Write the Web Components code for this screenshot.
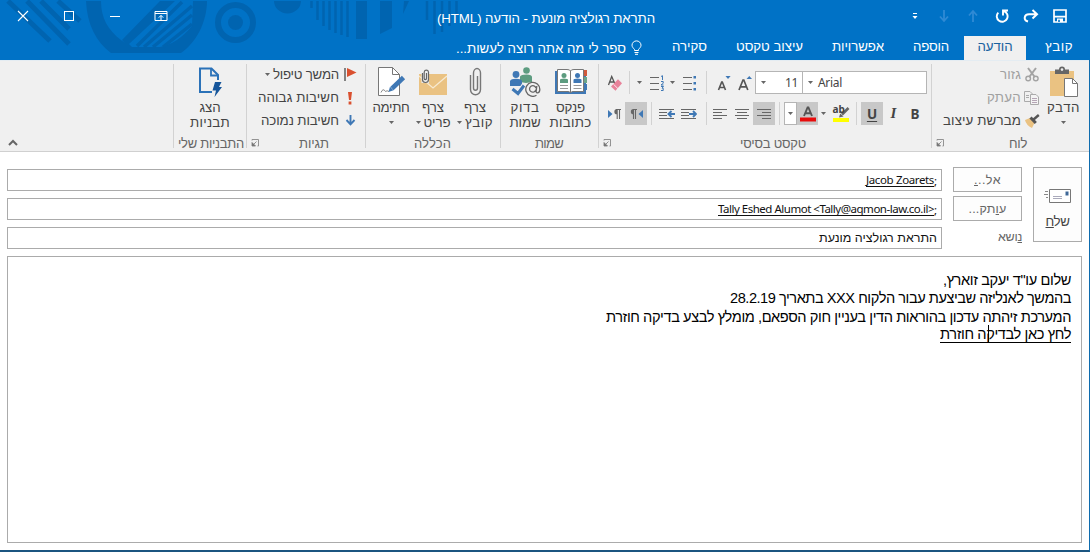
<!DOCTYPE html>
<html lang="he" dir="rtl">
<head>
<meta charset="utf-8">
<title>התראת רגולציה מונעת - הודעה (HTML)</title>
<style>
html,body{margin:0;padding:0;width:1090px;height:552px;overflow:hidden;background:#fff}
body{font-family:"Liberation Sans",Arial,sans-serif;font-size:13.3px;color:#444}
</style>
</head>
<body>
<mail-window></mail-window>
<script>
const ICONS = {
  close:[12,12,'<path d="M1 1L11 11M11 1L1 11" stroke="#fff" stroke-width="1.1"/>'],
  max:[12,12,'<rect x="1.5" y="1.5" width="9" height="9" stroke="#fff"/>'],
  min:[12,12,'<path d="M1 6.5H11" stroke="#fff"/>'],
  ribbonopt:[14,12,'<path d="M1 1.5H13V10.5H1ZM1 3.5H13M7 10V5.5M4.8 7.6L7 5.4L9.2 7.6" stroke="#fff"/>'],
  qmore:[8,10,'<path d="M2 2.5H6" stroke="#fff"/><path d="M1.500 5H6.500L4 8Z" fill="#fff"/>'],
  qdown:[12,14,'<path d="M6 1V12M2 7.5L6 12L10 7.5" stroke="#2f8ad4" stroke-width="1.8"/>'],
  qup:[12,14,'<path d="M6 13V2M2 6.5L6 2L10 6.5" stroke="#2f8ad4" stroke-width="1.8"/>'],
  undo:[14,14,'<path d="M3.3 3.6A5.4 5.4 0 1 0 8.8 2.2M8 6.5V1.5H13" stroke="#fff" stroke-width="1.9"/>'],
  redo:[16,14,'<path d="M5 12.5C0 11 1 5.2 6 5.2H13M9.5 1L14 5.2L9.5 9.4" stroke="#fff" stroke-width="2"/>'],
  save:[14,14,'<path d="M1 1H13V13H1ZM1 7.6H13" stroke="#fff" stroke-width="1.7"/><path d="M4 9.5H10V13H4Z" fill="#fff"/><path d="M5.2 10.7H6.8V13H5.2Z" fill="#0072c6"/>'],
  bulb:[11,15,'<path d="M3.5 10.5V9.5C2.5 8.3 1 7 1 5.2A4.5 4.3 0 0 1 10 5.2C10 7 8.5 8.3 7.5 9.5V10.5ZM3.5 12.5H7.5M4 14.3H7" stroke="#fff"/>'],
  paste:[30,32,'<path d="M1 5H25V30H1Z" fill="#eac282"/><path d="M6 3.5H10A3 3 0 0 1 16 3.5H20V8H6Z" fill="#666"/><circle cx="13" cy="3.6" r="1.3" fill="#eee"/><path d="M15.500 12.500H23.500L28.500 17.500V30.500H15.500Z" fill="#fff" stroke="#777"/><path d="M23.500 12.500V17.500H28.500" stroke="#777"/>'],
  cut:[14,15,'<path d="M3 1L9.8 10M11 1L4.2 10" stroke="#a3a3a3" stroke-width="2"/><circle cx="3.2" cy="11.500" r="2.300" stroke="#a3a3a3" stroke-width="1.400"/><circle cx="10.800" cy="11.500" r="2.300" stroke="#a3a3a3" stroke-width="1.400"/>'],
  copy:[15,14,'<path d="M.5.5H6L8.500 3V10.500H.5Z M2 4.500H5M2 6.500H5" stroke="#aaa"/><path d="M6.500 3.500H12L14.500 6V13.500H6.500Z" fill="#f4f4f4" stroke="#aaa"/><path d="M8 7.500H13M8 9.500H13M8 11.500H13" stroke="#b5a5b5"/>'],
  brush:[16,14,'<path d="M1 6L6 4L10.500 9L8 14Q2 11 1 6Z" fill="#eac282"/><path d="M6.500 3.500L11.800 9" stroke="#555" stroke-width="3"/><path d="M9.500 5.500L14.800 1" stroke="#555" stroke-width="2.400"/>'],
  eraser:[15,16,'<path d="M1.500 10L4.700 1.500L8 9M3 7H7" stroke="#555" stroke-width="1.300"/><path d="M4 11.500L11 4.300L15 8.300L8.500 15.800Z" fill="#e8829a"/><path d="M6.500 9.300L10.800 13.500" stroke="#fff" stroke-width=".8"/>'],
  numlist:[16,16,'<path d="M1 2.500H10M1 8.500H10M1 14.500H10" stroke="#666"/><path d="M12 1.500L13.500.7V5M12 6.500H14.200V8.300L12 10H14.500M12 11.500H14.500L13 13.200H14.200V15.500H12" stroke="#3f78b5" stroke-width="1"/>'],
  bullist:[15,16,'<path d="M1 2.500H10M1 8.500H10M1 14.500H10" stroke="#666"/><path d="M11.500 1H14V3.500H11.500ZM11.500 7H14V9.500H11.500ZM11.500 13H14V15.500H11.500Z" fill="#3f78b5"/>'],
  afont:[14,16,'<path d="M1 15L5 5H5.800L9.800 15M2.500 11.800H8.500" stroke="#555" stroke-width="1.700"/><path d="M8.500 4L11.300 1L14 4Z" fill="#3f78b5"/>'],
  asmall:[14,16,'<path d="M1.500 15L4.700 7H5.300L8.500 15M2.600 12.500H7.500" stroke="#555" stroke-width="1.600"/><path d="M8.500 1H13.600L11 4Z" fill="#3f78b5"/>'],
  ltr:[13,12,'<path d="M0 2L4.500 6L0 10Z" fill="#3f78b5"/><path d="M11.500 11V1.500M9.200 11V1.500M13 1.500H8" stroke="#666" stroke-width="1.100"/><path d="M9 1A2.600 2.600 0 0 0 9 6.300Z" fill="#666"/>'],
  rtl:[13,12,'<path d="M13 2L8.500 6L13 10Z" fill="#3f78b5"/><path d="M5.500 11V1.500M3.500 11V1.500M7 1.500H3" stroke="#666" stroke-width="1.100"/><path d="M3.500 1A2.600 2.600 0 0 0 3.500 6.300Z" fill="#666"/>'],
  indl:[16,12,'<path d="M0 1.500H15M0 4.500H8M0 7.500H8M0 10.500H15" stroke="#666"/><path d="M9.500 6H16M12.500 3L9.500 6L12.500 9" stroke="#3f78b5" stroke-width="1.900"/>'],
  indr:[16,12,'<path d="M0 1.500H15M0 4.500H8M0 7.500H8M0 10.500H15" stroke="#666"/><path d="M8 6H15M12 3L15 6L12 9" stroke="#3f78b5" stroke-width="1.900"/>'],
  all:[14,12,'<path d="M0 1.500H14M0 4.500H9M0 7.500H14M0 10.500H9" stroke="#666"/>'],
  alc:[14,12,'<path d="M0 1.500H14M2 4.500H12M0 7.500H14M2 10.500H12" stroke="#666"/>'],
  alr:[14,12,'<path d="M0 1.500H14M5 4.500H14M0 7.500H14M5 10.500H14" stroke="#666"/>'],
  acolor:[16,16,'<path d="M4 10L7.600 1.500H8.400L12 10M5.200 7.300H10.800" stroke="#555" stroke-width="1.900"/><path d="M0 11.500H16V15.500H0Z" fill="#e80c0c"/>'],
  hilite:[17,17,'<path d="M0 13H16V17H0Z" fill="#ff0"/><path d="M9 9.500L15.500 3" stroke="#666" stroke-width="2.600"/><path d="M6 12.500L7.200 8.500L10.500 11.500Z" fill="#666"/>'],
  book:[32,27,'<path d="M0 3H31V26H0Z" fill="#3f78b5"/><path d="M29 2H32V8H29Z" fill="#d05a3c"/><path d="M29 9H32V15H29Z" fill="#6aa58a"/><path d="M29 16H32V22H29Z" fill="#3f78b5"/><path d="M2.500 1.500H12Q15 1.500 15.500 3Q16 1.500 19 1.500H28.500V23.500H18Q16 23.500 15.500 25Q15 23.500 13 23.500H2.500Z" fill="#fff" stroke="#777"/><path d="M15.500 3V25" stroke="#777"/><circle cx="9" cy="7.500" r="2.500" fill="#5d9c80"/><path d="M5 15V12Q5 10.500 9 10.500T13 12V15Z" fill="#5d9c80"/><circle cx="22.500" cy="7.500" r="2.500" fill="#3f78b5"/><path d="M18.500 15V12Q18.500 10.500 22.500 10.500T26.500 12V15Z" fill="#3f78b5"/><path d="M5 17.500H13M5 20.500H13M18.500 17.500H26.500M18.500 20.500H26.500" stroke="#999"/>'],
  check:[31,30,'<circle cx="16.500" cy="3.500" r="3.300" fill="#5d9c80"/><path d="M10 15V9.500Q11 7.500 16.500 7.500Q22 7.500 22 10V15L16 16Z" fill="#5d9c80"/><circle cx="6" cy="7.500" r="3.400" fill="#3f78b5"/><path d="M0 19V14Q1 11.800 6 11.800T12 14V19Z" fill="#3f78b5"/><path d="M3 22L8 27L14.500 17.500" stroke="#f0f0f0" stroke-width="5"/><path d="M2.500 22L8 26.500L14 18.500" stroke="#3f78b5" stroke-width="3"/><circle cx="23" cy="22.500" r="7.500" fill="#f0f0f0"/><path d="M26.500 28.300A7 7 0 1 1 29.800 22.500C29.800 26.500 25.800 26.800 26.200 24L26.800 19M26 22.800A3.300 3.300 0 1 1 26 21" stroke="#666" stroke-width="1.300"/>'],
  clip:[13,29,'<path d="M1.500 8V22.500A4.700 5 0 0 0 11.500 22.500V6A3.500 4.500 0 0 0 4.500 6V21A2 2.300 0 0 0 8.500 21V9" stroke="#777" stroke-width="1.400"/>'],
  envclip:[29,28,'<path d="M0 6H28V27H0Z" fill="#eac282"/><path d="M0 8L14 20L28 8" stroke="#f7ead2" stroke-width="1.300"/><path d="M2.500 0H10V15H2.500Z" fill="#f0f0f0"/><path d="M3.500 5V11.500A3 3 0 0 0 9.500 11.500V4A2.200 2.500 0 0 0 5.200 4V10.500A1.200 1.500 0 0 0 7.500 10.500V5" stroke="#666" stroke-width="1.200"/>'],
  sign:[29,30,'<path d="M1.500.5H15.500L22.500 7.500V28.500H1.500Z" fill="#fff" stroke="#777"/><path d="M15.500.5V7.500H22.500" stroke="#777"/><path d="M4 25.500Q6 20.500 8.500 24.500Q10 23 12 24.500" stroke="#888"/><path d="M15 21.500L26.500 10.500" stroke="#3f78b5" stroke-width="4.600"/><path d="M11.500 25L13 19.800L16.500 23.300Z" fill="#3f78b5"/>'],
  flag:[13,15,'<path d="M1 1V14" stroke="#666" stroke-width="1.600"/><path d="M3 1L12.500 5.500L3 10Z" fill="#d9502f"/>'],
  high:[4,14,'<path d="M0 1H4L3 9H1ZM.6 10.500H3.400V13.500H.6Z" fill="#d9502f"/>'],
  low:[11,11,'<path d="M5.500 0V9M1.500 5L5.500 9.300L9.500 5" stroke="#3f78b5" stroke-width="1.900"/>'],
  templ:[25,32,'<path d="M14 26H2V2.500H13.500L20 9V14" stroke="#2b72b8" stroke-width="2"/><path d="M13 2.500V9.500H20" stroke="#2b72b8" stroke-width="1.800"/><path d="M17 16H23.500L21 21H24L16.500 31L18 24.500H14.500Z" fill="#16559a"/>'],
  launch:[8,8,'<path d="M1 1.500V.5H7.500V7H6.500" stroke="#888" stroke-width=".9"/><path d="M5.500 2.500L2 6M1 3.500V7H4.500Z" fill="#777" stroke="#777" stroke-width=".8"/>'],
  arrow:[5,3,'<path d="M0 0H5L2.500 3Z" fill="#666"/>'],
  chev:[10,7,'<path d="M1 6L5 2L9 6" stroke="#666" stroke-width="2"/>'],
  send:[27,14,'<path d="M5.500 .5H26.500V13.500H5.500Z" fill="#fff" stroke="#777"/><path d="M21.500 2.500H24.500V6.500H21.500Z" fill="#3f6898"/><path d="M9 7.500H18M9 9.500H18" stroke="#aab"/><path d="M1 2.500H4M0 5.500H4M2 8.500H4" stroke="#888"/>']
};
const make=(tag,html,after)=>customElements.define(tag,class extends HTMLElement{
  connectedCallback(){
    if(this.shadowRoot)return;
    this.attachShadow({mode:'open'}).innerHTML=typeof html==='function'?html(this):html;
    if(after)after(this);
  }
});
make('ui-icon',el=>{
  const [w,h,p]=ICONS[el.getAttribute('name')];
  return `<style>:host{display:block;flex:none;width:${w}px;height:${h}px}svg{display:block}</style><svg width="${w}" height="${h}" viewBox="0 0 ${w} ${h}" fill="none">${p}</svg>`;
});
/* Text run tracked to a set advance width (w, in px). */
make('fit-text','<style>:host{display:block;flex:none;white-space:nowrap}span{display:inline-block}</style><span><slot></slot></span>',el=>{
  const w=+el.getAttribute('w'),s=el.shadowRoot.querySelector('span'),n=el.textContent.length;
  s.style.letterSpacing=((w-s.getBoundingClientRect().width)/n)+'px';
  el.style.width=w+'px';
});
make('title-bar',`<style>
:host{display:flex;direction:ltr;height:32px;align-items:center;color:#fff;font-size:13.3px}
.c{width:46px;display:flex;justify-content:center}
.t{flex:1;display:flex;justify-content:center;padding:5px 0 0 8px}
.q{width:29px;display:flex;justify-content:center}
.end{width:16px}
</style>
<div class="c"><ui-icon name="close"></ui-icon></div><div class="c"><ui-icon name="max"></ui-icon></div><div class="c"><ui-icon name="min"></ui-icon></div><div class="c"><ui-icon name="ribbonopt"></ui-icon></div>
<div class="t"><fit-text w="218" dir="rtl">התראת רגולציה מונעת - הודעה (HTML)</fit-text></div>
<div class="q"><ui-icon name="qmore"></ui-icon></div><div class="q"><ui-icon name="qdown"></ui-icon></div><div class="q"><ui-icon name="qup"></ui-icon></div><div class="q"><ui-icon name="undo"></ui-icon></div><div class="q"><ui-icon name="redo"></ui-icon></div><div class="q"><ui-icon name="save"></ui-icon></div><div class="end"></div>`);
make('tab-strip',`<style>
:host{display:flex;height:24px;margin-top:4px;padding-right:17px;color:#fff;line-height:21px;font-size:13.3px}
.a{width:62px;height:24px;margin:0 19px 0 15px;background:#f0f0f0;color:#19619e;display:flex;justify-content:center}
.g{margin-left:29px}
ui-icon{margin:4px 1px 0 5px}.tell{margin-top:2px}
</style>
<fit-text w="28">קובץ</fit-text><div class="a"><fit-text w="35">הודעה</fit-text></div>
<fit-text class="g" w="36">הוספה</fit-text><fit-text class="g" w="52">אפשרויות</fit-text><fit-text class="g" w="67">עיצוב טקסט</fit-text><fit-text class="g" w="35">סקירה</fit-text>
<ui-icon name="bulb"></ui-icon><fit-text class="tell" w="170">ספר לי מה אתה רוצה לעשות...</fit-text>`);
make('header-art',`<style>:host{display:block;position:absolute;left:0;top:0}svg{display:block}</style>
<svg width="470" height="60" viewBox="0 0 470 60" fill="none" stroke="#0064b0">
<path d="M8 1L50 41M27 1L69 44M41 1L69 29M58 1L80 21" stroke-width="5"/>
<path d="M86 1H101C101 18 108 30 121 40L125 43L122 40L160 1H175L129 44L132 47H160Q177 44 192 26L193 1H207C207 22 196 43 181 53H111C96 42 87 24 86 1Z" fill="#0064b0" stroke="none"/>
<path d="M137 46L182 2M144 47L192 6M153 47L192 15M163 47L192 24" stroke-width="3.500"/>
<circle cx="235.500" cy="22.500" r="17.500" stroke-width="6"/><circle cx="235.500" cy="22.500" r="7.500" fill="#0064b0" stroke="none"/>
<path d="M274 1H301A13.500 12.500 0 0 1 274 1ZM356 1H367V39H356ZM380 1H392V28L380 34ZM404 1H409L403 14Z" fill="#0064b0" stroke="none"/>
<path d="M311.500 1V8M317.500 1V20M323.500 1V26M329.500 1V30M335.500 1V33M341.500 1V35M347.500 1V37M427 1V20M434.500 1V34M442 1V32M449.500 1V26M456.500 1V14" stroke-width="2.500"/>
</svg>`);
/* A ribbon group: content in the default slot, caption below. */
make('ribbon-group',el=>`<style>
:host{display:flex;flex-direction:column;box-sizing:border-box;flex:none;width:${el.getAttribute('width')}px;height:84px;margin-top:3px;border-left:1px solid #d2d2d2;color:#444}
.m{height:69px;flex:none;display:flex}
.f{display:flex;align-items:center;height:18px;flex:none;margin-top:1px;color:#666;font-size:13px;padding-left:4px;justify-content:space-between;padding-right:${el.getAttribute('pad')||0}px}
</style><div class="m"><slot></slot></div><div class="f"><fit-text w="${el.getAttribute('cw')}">${el.getAttribute('caption')}</fit-text>${el.hasAttribute('launch')?'<ui-icon name="launch"></ui-icon>':''}</div>`);
make('big-button',el=>{
  const [a,aw]=[el.getAttribute('l1'),el.getAttribute('w1')],[b,bw]=[el.getAttribute('l2'),el.getAttribute('w2')];
  return `<style>:host{display:flex;flex-direction:column;align-items:center;flex:none;width:${el.getAttribute('width')}px}
.i{height:35px;display:flex;align-items:center}.r{height:15px;line-height:15px;display:flex;align-items:center;gap:3px;margin-top:0}
.i+.r{margin-top:1px}</style><div class="i"><ui-icon name="${el.getAttribute('icon')}"></ui-icon></div><div class="r"><fit-text w="${aw}">${a}</fit-text></div><div class="r">${b?`<fit-text w="${bw}">${b}</fit-text>`:''}${el.hasAttribute('menu')?'<ui-icon name="arrow"></ui-icon>':''}</div>`;
});
make('small-button',el=>`<style>:host{display:flex;align-items:center;height:23px}.i{width:${el.getAttribute('iw')||17}px;display:flex;justify-content:center;margin-left:${el.getAttribute('gap')||2}px}ui-icon.a{margin-right:3px}</style>
<div class="i"><ui-icon name="${el.getAttribute('icon')}"></ui-icon></div><fit-text w="${el.getAttribute('w')}"><slot></slot></fit-text>${el.hasAttribute('menu')?'<ui-icon class="a" name="arrow"></ui-icon>':''}`,el=>{
  const f=el.shadowRoot.querySelector('fit-text'),s=f.shadowRoot.querySelector('span');
  s.style.letterSpacing='0px';
  const w=+el.getAttribute('w');
  s.style.letterSpacing=((w-s.getBoundingClientRect().width)/el.textContent.length)+'px';
});
/* Fixed-width toolbar cell that centres its content. */
make('tool-cell',el=>`<style>:host{display:flex;flex:none;align-items:center;justify-content:center;box-sizing:border-box;width:${el.getAttribute('w')}px;height:23px}:host([on]){background:#c8c8c8}:host([sep]){background:#d2d2d2}:host([box]){background:#fff;border:1px solid #b5b5b5}</style><slot></slot>`);
const c=(w,n,x='')=>`<tool-cell w="${w}" ${x}>${n?`<ui-icon name="${n}"></ui-icon>`:''}</tool-cell>`;
make('font-tools',`<style>
:host{display:flex;flex-direction:column;width:332px;direction:ltr}
.r{display:flex;height:23px;margin-top:7px}.r+.r{margin-top:8px}
.f{box-sizing:border-box;border:1px solid #b5b5b5;background:#fff;display:flex;align-items:center;height:23px;font:12px "Noto Sans",sans-serif;color:#444}
.s{width:48px;padding:0 4px 0 5px;justify-content:space-between}.n{width:125px;margin-left:-1px;padding-left:5px;gap:5px}
.ab{font:bold 10px "Noto Sans",sans-serif;position:absolute;left:0;top:-3px}
.h{position:relative}b,i,u{font:bold 13.5px "Noto Sans",sans-serif;color:#444}i{font:italic bold 15px "Liberation Serif",serif}u{text-underline-offset:2px}
</style>
<div class="r">${c(30,'eraser')}${c(1,'','sep')}${c(18,'arrow')}${c(17,'numlist')}${c(15,'arrow')}${c(19,'bullist')}${c(7)}${c(1,'','sep')}${c(6)}${c(22,'asmall')}${c(20,'afont')}
<div class="f s"><ui-icon name="arrow"></ui-icon><fit-text w="13">11</fit-text></div><div class="f n"><ui-icon name="arrow"></ui-icon><fit-text w="24">Arial</fit-text></div></div>
<div class="r">${c(4)}${c(22,'ltr')}${c(22,'rtl','on')}${c(4)}${c(1,'','sep')}${c(4)}${c(22,'indl')}${c(22,'indr')}${c(6)}${c(1,'','sep')}${c(2)}${c(22,'all')}${c(22,'alc')}${c(22,'alr','on')}${c(4)}${c(1,'','sep')}${c(4)}${c(13,'arrow','box')}${c(21,'acolor','on')}${c(11,'arrow')}<tool-cell w="24"><div class="h"><ui-icon name="hilite"></ui-icon><span class="ab">ab</span></div></tool-cell>${c(3)}${c(1,'','sep')}${c(4)}<tool-cell w="22" on><u>U</u></tool-cell><tool-cell w="21"><i>I</i></tool-cell><tool-cell w="22"><b>B</b></tool-cell></div>`);
make('ribbon-bar',`<style>
:host{display:flex;position:relative;box-sizing:border-box;height:92px;background:#f0f0f0;border-bottom:1px solid #d0d0d0;border-top:1px solid #e4ecf2;font-size:13.3px}
.col{display:flex;flex-direction:column;margin-top:-1px}.dim{color:#a0a0a0}.x{position:absolute;left:8px;bottom:5px}
</style>
<ribbon-group width="158" caption="לוח" cw="18" pad="62" launch><big-button width="47" style="margin-right:2px" icon="paste" l1="הדבק" w1="33" menu></big-button><div class="col"><small-button class="dim" icon="cut" w="21">גזור</small-button><small-button class="dim" icon="copy" w="34">העתק</small-button><small-button icon="brush" w="78">מברשת עיצוב</small-button></div></ribbon-group>
<ribbon-group width="333" caption="טקסט בסיסי" cw="66" pad="125" launch><font-tools></font-tools></ribbon-group>
<ribbon-group width="98" caption="שמות" cw="28" pad="35"><big-button width="47" style="margin-right:4px" icon="book" l1="פנקס" w1="29" l2="כתובות" w2="42"></big-button><big-button width="44" icon="check" l1="בדוק" w1="29" l2="שמות" w2="31"></big-button></ribbon-group>
<ribbon-group width="135" caption="הכללה" cw="37" pad="49"><big-button width="42" style="margin-right:4px" icon="clip" l1="צרף" w1="22" l2="קובץ" w2="28" menu></big-button><big-button width="42" icon="envclip" l1="צרף" w1="22" l2="פריט" w2="27" menu></big-button><big-button width="42" icon="sign" l1="חתימה" w1="37" menu></big-button></ribbon-group>
<ribbon-group width="119" caption="תגיות" cw="30" pad="36" launch><div class="col" style="margin-right:7px"><small-button iw="15" gap="4" icon="flag" w="66" menu>המשך טיפול</small-button><small-button iw="17" gap="2" icon="high" w="81">חשיבות גבוהה</small-button><small-button iw="15" gap="4" icon="low" w="78">חשיבות נמוכה</small-button></div></ribbon-group>
<ribbon-group width="73" caption="התבניות שלי" cw="66" pad="2"><big-button width="72" icon="templ" l1="הצג" w1="21" l2="תבניות" w2="40"></big-button></ribbon-group>
<ui-icon class="x" name="chev"></ui-icon>`);
make('address-form',`<style>
:host{display:flex;align-items:flex-start;padding:15px 7px 0 0;height:90px;flex:none;box-sizing:border-box;color:#666;font-size:12.5px}
.send,.b{box-sizing:border-box;border:1px solid #ababab;background:#fdfdfd}
.send{width:49px;height:75px;display:flex;flex-direction:column;align-items:center;padding-top:21px;gap:11px;font-size:13.3px;color:#444}
.bs{width:69px;margin:0 11px;display:flex;flex-direction:column;gap:4px}.b{height:25px;flex:none;display:flex;align-items:center;justify-content:center}
.sub{height:24px;display:flex;align-items:center}
.fs{display:flex;flex-direction:column;gap:7px;padding-top:2px}
.f{box-sizing:border-box;flex:none;width:935px;height:22px;border:1px solid #ababab;background:#fff;padding:0 4px;direction:ltr;display:flex;justify-content:flex-end;align-items:center;color:#111;font:11.5px "Noto Sans",sans-serif}
.u{border-bottom:1px solid #111;line-height:12px}.he{font:12.5px "Liberation Sans",sans-serif}
</style>
<div class="send"><ui-icon name="send"></ui-icon><fit-text w="24">של<u>ח</u></fit-text></div>
<div class="bs"><div class="b"><fit-text w="27">אל..<u>.</u></fit-text></div><div class="b"><fit-text w="38">ע<u>ו</u>תק...</fit-text></div><div class="sub"><fit-text w="24"><u>נ</u>ושא</fit-text></div></div>
<div class="fs"><div class="f"><fit-text class="u" w="68">Jacob Zoarets</fit-text><fit-text w="3">;</fit-text></div><div class="f"><fit-text class="u" w="216">Tally Eshed Alumot &lt;Tally@aqmon-law.co.il&gt;</fit-text><fit-text w="3">;</fit-text></div><div class="f he"><fit-text w="118" dir="rtl">התראת רגולציה מונעת</fit-text></div></div>`);
make('message-body',`<style>
:host{display:block;flex:none;box-sizing:border-box;width:1075px;height:287px;margin:14px 7px 0 0;border:1px solid #ababab;padding:14px 10px 0 0;font-size:14.6px;line-height:18.300px;color:#000}
.k{position:relative;width:131px}.caret{position:absolute;right:82px;top:-1px;width:1px;height:17px;background:#000}.l{border-bottom:1px solid #000;line-height:16px}
</style>
<fit-text w="128">שלום עו"ד יעקב זוארץ,</fit-text><fit-text w="341">בהמשך לאנליזה שביצעת עבור הלקוח XXX בתאריך 28.2.19</fit-text><fit-text w="465">המערכת זיהתה עדכון בהוראות הדין בעניין חוק הספאם, מומלץ לבצע בדיקה חוזרת</fit-text><div class="k"><fit-text class="l" w="131">לחץ כאן לבדיקה חוזרת</fit-text><div class="caret"></div></div>`);
make('mail-window',`<style>
:host{display:block;box-sizing:border-box;width:1090px;height:552px;border-right:1px solid #0f6cae;border-bottom:2px solid #1b5580;background:#fff}
header{position:relative;height:60px;width:1090px;background:#0072c6;margin-right:-1px}title-bar,tab-strip{position:relative}
main{display:flex;flex-direction:column}
</style><header><header-art></header-art><title-bar></title-bar><tab-strip></tab-strip></header><ribbon-bar></ribbon-bar><main><address-form></address-form><message-body></message-body></main>`);
</script>
</body>
</html>
